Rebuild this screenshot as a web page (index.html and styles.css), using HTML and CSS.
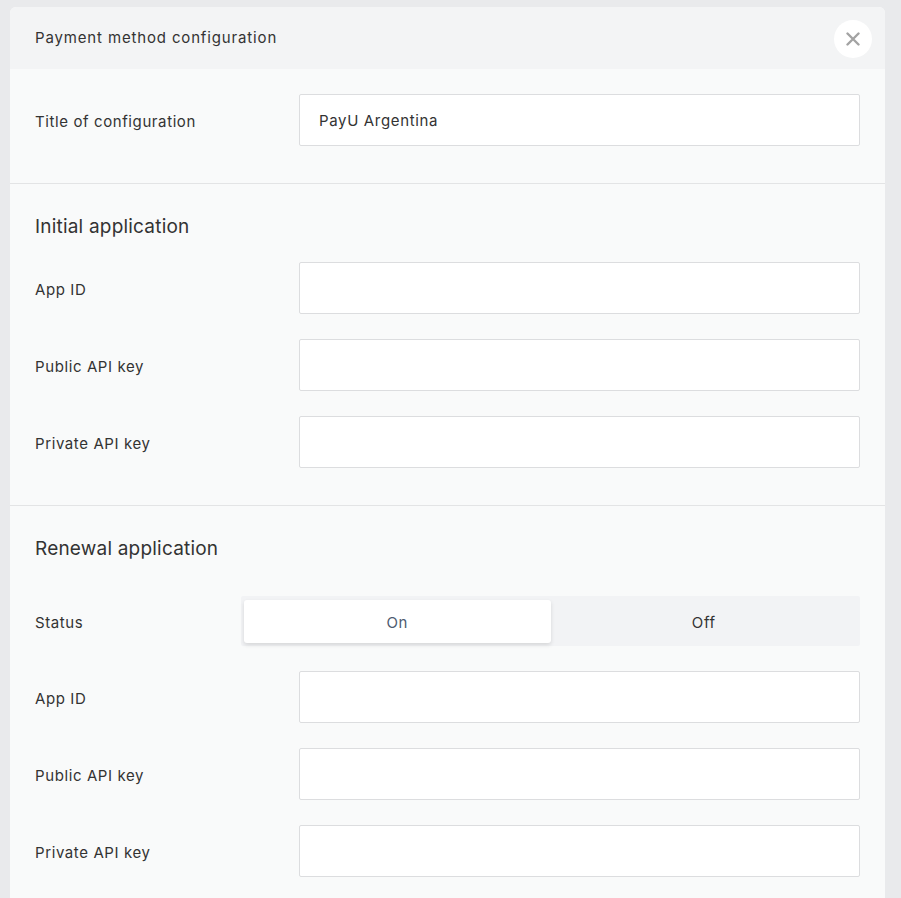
FILE: index.html
```html
<!DOCTYPE html>
<html lang="en">
<head>
<meta charset="utf-8">
<title>Payment method configuration</title>
<link rel="stylesheet" href="styles.css">
</head>
<body>
<div class="backdrop">
  <section class="modal">
    <header class="modal-header">
      <h1 class="modal-title">Payment method configuration</h1>
      <button class="close-btn" type="button" aria-label="Close">
        <svg width="14" height="14" viewBox="0 0 14 14"><path d="M1.5 1.5 L12.5 12.5 M12.5 1.5 L1.5 12.5" stroke="#a3a3a3" stroke-width="2.4" stroke-linecap="round"/></svg>
      </button>
    </header>

    <div class="section">
      <div class="row">
        <label class="label">Title of configuration</label>
        <input class="field" type="text" value="PayU Argentina">
      </div>
    </div>

    <div class="section">
      <h2 class="section-title">Initial application</h2>
      <div class="row">
        <label class="label">App ID</label>
        <input class="field" type="text">
      </div>
      <div class="row">
        <label class="label">Public API key</label>
        <input class="field" type="text">
      </div>
      <div class="row">
        <label class="label">Private API key</label>
        <input class="field" type="text">
      </div>
    </div>

    <div class="section">
      <h2 class="section-title">Renewal application</h2>
      <div class="row row-status">
        <label class="label">Status</label>
        <div class="switch">
          <button class="switch-opt is-active" type="button">On</button>
          <button class="switch-opt" type="button">Off</button>
        </div>
      </div>
      <div class="row">
        <label class="label">App ID</label>
        <input class="field" type="text">
      </div>
      <div class="row">
        <label class="label">Public API key</label>
        <input class="field" type="text">
      </div>
      <div class="row">
        <label class="label">Private API key</label>
        <input class="field" type="text">
      </div>
    </div>
  </section>
</div>
</body>
</html>
```

FILE: styles.css
```css
html, body {
  margin: 0;
  height: 100%;
  overflow: hidden;
}

body {
  background: #e9eaec;
  font-family: "Inter", "Liberation Sans", sans-serif;
  color: #333;
}

.backdrop {
  padding: 7px 0 0 10px;
}

.modal {
  width: 875px;
  background: #f9fafa;
  border-radius: 6px 6px 0 0;
  overflow: hidden;
}

.modal-header {
  height: 62px;
  background: #f3f4f5;
  display: flex;
  align-items: center;
  justify-content: space-between;
  padding: 0 13px 0 25px;
}

.modal-title {
  margin: 0 0 2px;
  font-size: 15px;
  font-weight: 400;
  letter-spacing: 0.85px;
  color: #333;
}

.close-btn {
  width: 38px;
  height: 38px;
  border: 0;
  border-radius: 50%;
  background: #fff;
  display: flex;
  align-items: center;
  justify-content: center;
  padding: 0;
  margin-top: 1px;
}

.section {
  padding: 25px 25px 37px;
  display: flex;
  flex-direction: column;
  gap: 25px;
}

.section + .section {
  border-top: 1px solid #e3e4e5;
}

.section-title {
  margin: 1px 0 -7px;
  font-size: 19px;
  font-weight: 400;
  line-height: 34px;
  letter-spacing: 0.2px;
  color: #333;
}

.row {
  display: flex;
  align-items: center;
}

.label {
  width: 264px;
  flex: none;
  padding-top: 2px;
  font-size: 15px;
  letter-spacing: 0.6px;
  color: #333;
}

.field {
  flex: 1;
  height: 52px;
  box-sizing: border-box;
  border: 1px solid #dcdddf;
  border-radius: 2px;
  background: #fff;
  padding: 0 19px;
  font-family: inherit;
  font-size: 15px;
  letter-spacing: 0.65px;
  color: #333;
  outline: none;
}

.row-status {
  margin-top: 12px;
}

.row-status .label {
  width: 206px;
}

.switch {
  flex: 1;
  height: 50px;
  box-sizing: border-box;
  background: #f2f3f5;
  border-radius: 2px;
  padding: 4px 3px 3px;
  display: flex;
}

.switch-opt {
  flex: 1;
  border: 0;
  background: transparent;
  border-radius: 3px;
  font-family: inherit;
  font-size: 15px;
  letter-spacing: 0.65px;
  color: #333;
  padding: 2px 0 0;
}

.switch-opt.is-active {
  background: #fff;
  color: #4e5b70;
  box-shadow: 0 2px 4px rgba(0, 0, 0, 0.12);
}
```
